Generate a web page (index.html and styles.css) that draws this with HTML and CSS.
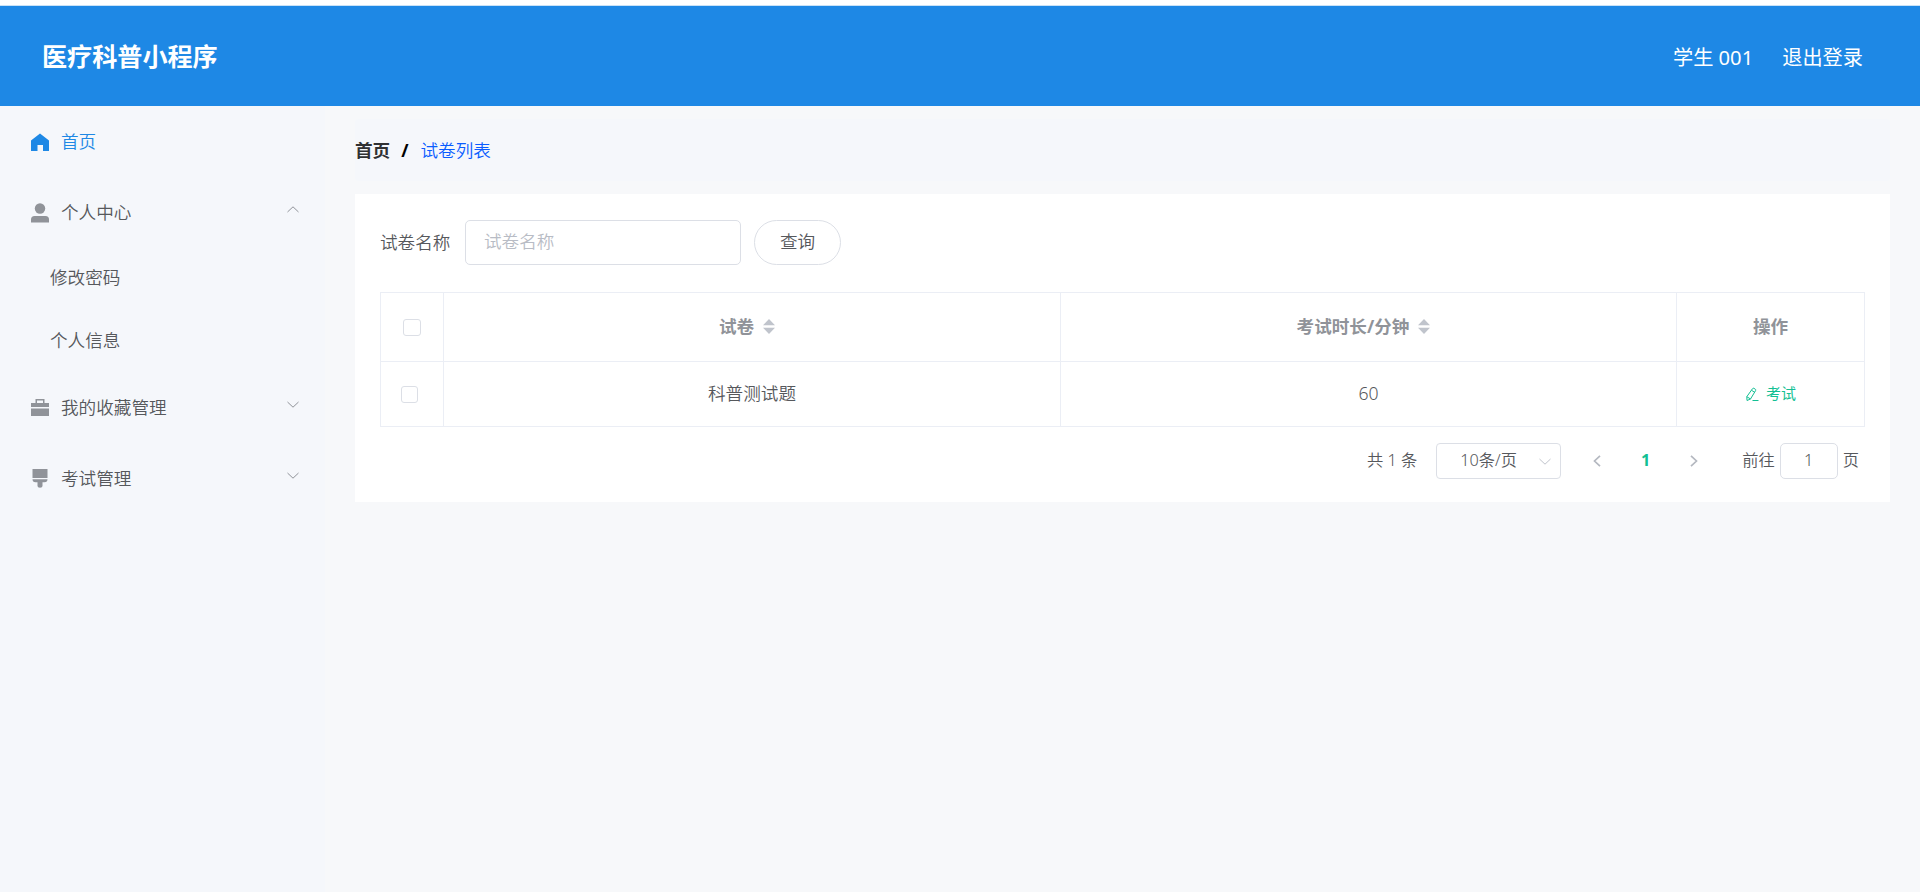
FILE: index.html
```html
<!DOCTYPE html>
<html lang="zh-CN">
<head>
<meta charset="utf-8">
<title>医疗科普小程序</title>
<link rel="stylesheet" href="styles.css">
</head>
<body>
<header class="header">
  <h1 class="brand">医疗科普小程序</h1>
  <div class="user"><span>学生 001</span><span>退出登录</span></div>
</header>
<div class="layout">
  <nav class="sidebar">
    <div class="item active">
      <svg class="icon" viewBox="0 0 18 18"><path d="M9 .5 18 7.500V18h-6v-6H6.500v6H0V7.500z"/></svg>
      <span>首页</span>
    </div>
    <div class="item">
      <svg class="icon" viewBox="0 0 18 18"><circle cx="9" cy="4.500" r="5.200"/><path d="M0 18.500v-3q0-3.500 3.500-3.500h11q3.500 0 3.500 3.500v3z"/></svg>
      <span>个人中心</span>
      <svg class="chevron" viewBox="0 0 12 7"><path d="M.5 6 6 .8 11.500 6"/></svg>
    </div>
    <div class="submenu">
      <div class="subitem">修改密码</div>
      <div class="subitem">个人信息</div>
    </div>
    <div class="item">
      <svg class="icon" viewBox="0 0 18 18"><path fill-rule="evenodd" d="M0 8V4h4.500V0h9v4H18v4zM6 4h6V1.500H6zM0 9.500h18V17H0z"/></svg>
      <span>我的收藏管理</span>
      <svg class="chevron" viewBox="0 0 12 7"><path d="M.5 1 6 6.200 11.500 1"/></svg>
    </div>
    <div class="item">
      <svg class="icon" viewBox="0 0 18 18"><path d="M1.500-1h15v9h-15zM1.500 9.200h15q0 3-3 3h-2V16q0 1.800-2.500 1.800T6.500 16v-3.800h-2q-3 0-3-3z"/></svg>
      <span>考试管理</span>
      <svg class="chevron" viewBox="0 0 12 7"><path d="M.5 1 6 6.200 11.500 1"/></svg>
    </div>
  </nav>
  <main class="main">
    <div class="breadcrumb"><b>首页</b><b class="slash">/</b><span class="current">试卷列表</span></div>
    <section class="card">
      <form class="search">
        <label for="name">试卷名称</label>
        <input id="name" class="field" type="text" placeholder="试卷名称">
        <button class="query" type="button">查询</button>
      </form>
      <div class="table">
        <div class="cell head"><i class="check wide"></i></div>
        <div class="cell head sortable"><span>试卷</span><svg class="sort" viewBox="0 0 12 15"><path d="M0 6.300 6 0l6 6.300zM0 8.700h12L6 15z"/></svg></div>
        <div class="cell head sortable"><span>考试时长/分钟</span><svg class="sort" viewBox="0 0 12 15"><path d="M0 6.300 6 0l6 6.300zM0 8.700h12L6 15z"/></svg></div>
        <div class="cell head">操作</div>
        <div class="cell"><i class="check"></i></div>
        <div class="cell value">科普测试题</div>
        <div class="cell value">60</div>
        <div class="cell action"><svg class="edit" viewBox="0 0 13 15"><path d="M6.500 1.700q.6-.9 1.500-.3l1.300.8q.8.5.3 1.400L4.500 12l-3.500 1.500L.8 9.700zM5.500 3.300l3.200 2M.8 9.700l3.700 2.300M6.500 13.500H12.500"/></svg><span>考试</span></div>
      </div>
      <div class="pagination">
        <span class="total">共 1 条</span>
        <div class="select"><span>10条/页</span><svg class="chevron" viewBox="0 0 12 7"><path d="M.5 1 6 6.200 11.500 1"/></svg></div>
        <svg class="arrow" viewBox="0 0 8 12"><path d="M7 .8 1.500 6 7 11.200"/></svg>
        <b class="page">1</b>
        <svg class="arrow" viewBox="0 0 8 12"><path d="M1 .8 6.500 6 1 11.200"/></svg>
        <span class="goto">前往</span>
        <div class="jump">1</div>
        <span>页</span>
      </div>
    </section>
  </main>
</div>
</body>
</html>
```
FILE: styles.css
```css
* { box-sizing: border-box; }
body {
  margin: 0;
  padding-top: 5px;
  min-height: 892px;
  display: flex;
  flex-direction: column;
  background: #fff;
  color: #56585c;
  font: 350 17.6px/1.3 "Noto Sans", "Noto Sans CJK SC", sans-serif;
}
.header {
  height: 101px;
  flex: none;
  padding: 0 57px 0 42px;
  display: flex;
  align-items: center;
  justify-content: space-between;
  border-top: 1px solid #c9e2f7;
  background: #1e88e5;
  color: #fff;
}
.brand { margin: 0; font-size: 25.1px; font-weight: 700; }
.user { display: flex; gap: 29px; padding-top: 2px; font-size: 20.2px; font-weight: 400; }
.layout { flex: 1; display: flex; background: #f7f8fa; }
.sidebar { width: 325px; flex: none; background: #f5f7fb; }
.item {
  height: 71px;
  padding: 0 26px 0 31px;
  display: flex;
  align-items: center;
}
.item.active { color: #1e88e5; }
.icon { width: 18px; height: 18px; margin-right: 12px; overflow: visible; fill: #909399; }
.active .icon { fill: #1e88e5; }
.chevron { width: 12px; height: 7px; margin-left: auto; fill: none; stroke: #909399; }
.item .chevron { margin-bottom: 6px; }
.submenu { margin-top: -2px; }
.subitem { height: 63px; padding-left: 50px; display: flex; align-items: center; }
.main { flex: 1; padding: 13px 30px 0; }
.breadcrumb {
  height: 62px;
  margin-bottom: 13px;
  display: flex;
  align-items: center;
  border-radius: 4px;
  background: #f5f7fb;
  color: #303133;
}
.breadcrumb b { font-weight: 700; }
.breadcrumb .slash { margin: 0 12px 0 11px; color: #000; }
.current { color: #0a5cff; }
.card { height: 308px; padding: 26px 25px 0; background: #fff; }
.search { height: 45px; margin-bottom: 27px; display: flex; align-items: center; }
.search label { padding-bottom: 1px; }
.field {
  width: 276px;
  height: 45px;
  margin: 0 13px 0 14.600px;
  padding: 0 18px 3px;
  border: 1px solid #dcdfe6;
  border-radius: 5px;
  font: inherit;
}
.field::placeholder { color: #b8bcc5; }
.query {
  width: 87px;
  height: 45px;
  padding: 0 0 3px;
  border: 1px solid #dcdfe6;
  border-radius: 23px;
  background: #fff;
  color: #56585c;
  font: inherit;
}
.table {
  width: 1485px;
  display: grid;
  grid-template-columns: 63px 617px 616px 188px;
  grid-template-rows: 69px 65px;
  border: 1px solid #ebeef5;
  border-width: 1px 0 0 1px;
}
.cell {
  display: flex;
  align-items: center;
  justify-content: center;
  border: 1px solid #ebeef5;
  border-width: 0 1px 1px 0;
}
.value { padding-bottom: 1px; }
.head { color: #909399; font-weight: 700; padding-bottom: 1px; }
.sortable { padding: 0 10px 2px 0; }
.check { width: 17px; height: 17px; margin-right: 5px; border: 1px solid #dcdfe6; border-radius: 3px; }
.check.wide { width: 18px; margin: 2px 1px 0 0; }
.sort { width: 12px; height: 15px; margin-left: 9px; fill: #c0c4cc; }
.action { padding-left: 1px; color: #13bf93; font-size: 15px; font-weight: 400; }
.edit { width: 13px; height: 15px; margin-right: 7px; fill: none; stroke: #13bf93; }
.pagination {
  height: 38px;
  margin-top: 15px;
  padding-right: 6px;
  display: flex;
  align-items: center;
  justify-content: flex-end;
  font-size: 16.25px;
}
.select {
  width: 125px;
  height: 36px;
  margin: 0 32px 0 19px;
  padding: 0 9px 0 23px;
  display: flex;
  align-items: center;
  border: 1px solid #dcdfe6;
  border-radius: 4px;
}
.select .chevron { stroke: #c0c4cc; }
.arrow { width: 8px; height: 12px; margin-bottom: 1px; fill: none; stroke: #b4b8c0; stroke-width: 1.700; }
.page { width: 89px; text-align: center; color: #13bf93; font-weight: 700; }
.goto { margin: 0 5px 0 44px; }
.jump {
  width: 58px;
  height: 36px;
  margin-right: 5px;
  display: flex;
  align-items: center;
  justify-content: center;
  border: 1px solid #dcdfe6;
  border-radius: 5px;
}
```
